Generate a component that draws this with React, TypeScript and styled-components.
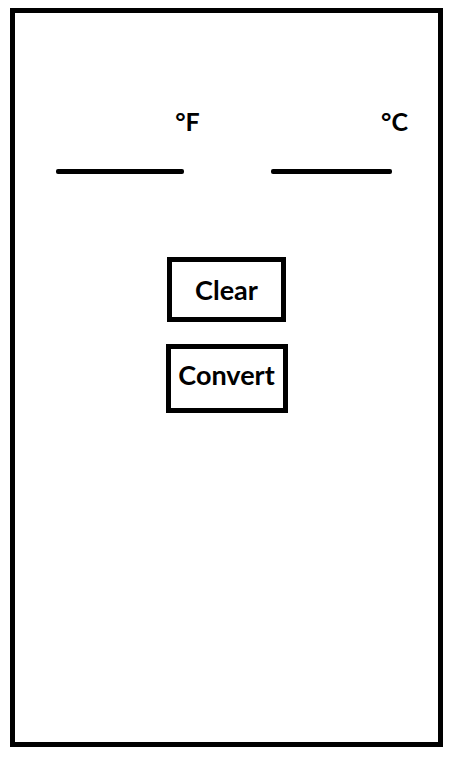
import React, { useState } from "react";
import styled, { createGlobalStyle } from "styled-components";

const GlobalStyle = createGlobalStyle`
  *, *::before, *::after {
    box-sizing: border-box;
  }
  body {
    margin: 0;
    background: #fff;
    color: #000;
    font-family: Lato, "Open Sans", sans-serif;
  }
`;

const Screen = styled.main`
  display: flex;
  flex-direction: column;
  min-height: 100vh;
  padding: 8px 10px 11px;
`;

const Frame = styled.form`
  flex: 1;
  display: flex;
  flex-direction: column;
  align-items: center;
  gap: 83px;
  padding: 91px 41px 40px;
  border: 5px solid #000;
`;

const Fields = styled.div`
  display: flex;
  justify-content: space-between;
  align-items: flex-start;
  width: 100%;
  padding-right: 5px;
`;

const Field = styled.div<{ $share: number }>`
  display: flex;
  flex-direction: column;
  width: ${({ $share }) => $share}%;
`;

const Unit = styled.label`
  align-self: flex-end;
  margin-right: -16px;
  font-size: 25px;
  font-weight: 700;
  line-height: 34px;
`;

const ValueInput = styled.input`
  width: 100%;
  height: 31px;
  padding: 0 4px;
  border: 0;
  background: transparent;
  color: inherit;
  font-family: inherit;
  font-size: 25px;
  font-weight: 700;
  outline-offset: 2px;
`;

const Underline = styled.div`
  height: 5px;
  border-radius: 2px;
  background: #000;
`;

const Actions = styled.div`
  display: flex;
  flex-direction: column;
  align-items: center;
  gap: 22px;
`;

const ActionButton = styled.button<{ $large?: boolean }>`
  min-width: ${({ $large }) => ($large ? 122 : 119)}px;
  height: ${({ $large }) => ($large ? 69 : 65)}px;
  padding: ${({ $large }) => ($large ? "0 4px 8px" : "0 4px")};
  border: 5px solid #000;
  background: #fff;
  color: inherit;
  font-family: inherit;
  font-size: 27px;
  font-weight: 700;
  line-height: 32px;
  cursor: pointer;
`;

export default function App() {
  const [fahrenheit, setFahrenheit] = useState("");
  const [celsius, setCelsius] = useState("");

  const clear = () => {
    setFahrenheit("");
    setCelsius("");
  };

  const convert = (event: React.FormEvent) => {
    event.preventDefault();
    if (fahrenheit !== "") {
      setCelsius((((Number(fahrenheit) - 32) * 5) / 9).toFixed(1));
    } else if (celsius !== "") {
      setFahrenheit(((Number(celsius) * 9) / 5 + 32).toFixed(1));
    }
  };

  return (
    <Screen>
      <GlobalStyle />
      <Frame onSubmit={convert}>
        <Fields>
          <Field $share={38}>
            <Unit htmlFor="fahrenheit">°F</Unit>
            <ValueInput
              id="fahrenheit"
              inputMode="decimal"
              value={fahrenheit}
              onChange={(event) => setFahrenheit(event.target.value)}
            />
            <Underline />
          </Field>
          <Field $share={36}>
            <Unit htmlFor="celsius">°C</Unit>
            <ValueInput
              id="celsius"
              inputMode="decimal"
              value={celsius}
              onChange={(event) => setCelsius(event.target.value)}
            />
            <Underline />
          </Field>
        </Fields>
        <Actions>
          <ActionButton type="button" onClick={clear}>
            Clear
          </ActionButton>
          <ActionButton type="submit" $large>
            Convert
          </ActionButton>
        </Actions>
      </Frame>
    </Screen>
  );
}
